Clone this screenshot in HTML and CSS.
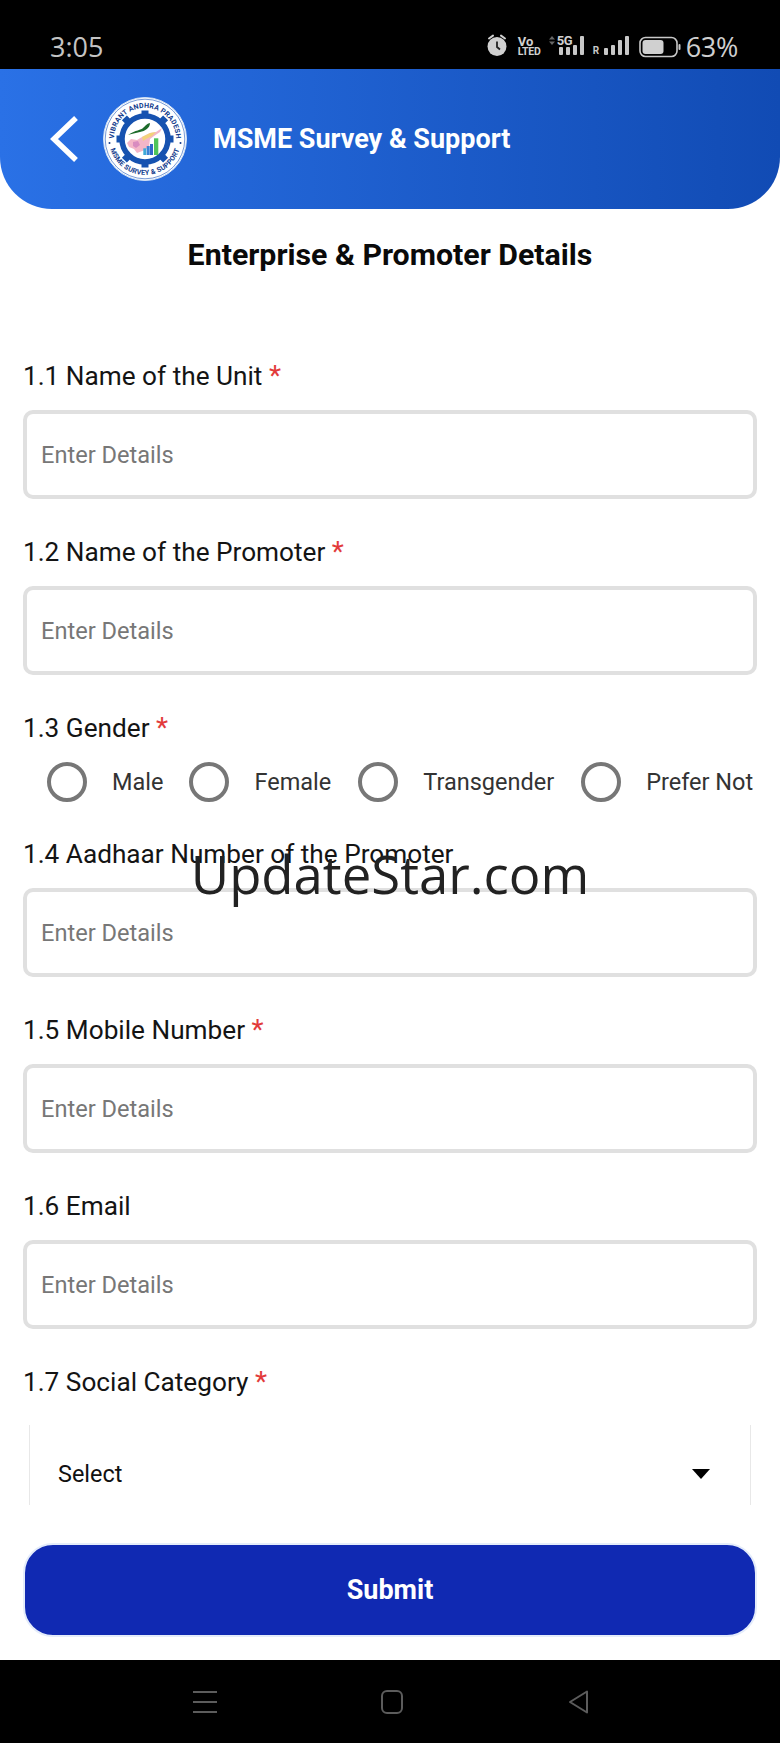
FILE: index.html
```html
<!DOCTYPE html>
<html lang="en">
<head>
<meta charset="utf-8">
<title>MSME Survey &amp; Support</title>
<link rel="stylesheet" href="styles.css">
</head>
<body>
<div class="screen">
  <div class="status">
    <span class="time">3:05</span>
    <div class="status-icons">
      <svg class="i-alarm" width="22" height="24" viewBox="0 0 22 24"><circle cx="11" cy="13.5" r="9.5" fill="#d0d0d0"/><path d="M3 5.500 7 2.600M19 5.500 15 2.600" stroke="#d0d0d0" stroke-width="2" stroke-linecap="round"/><path d="M11 8.500v5.500l3 2.500" stroke="#222" stroke-width="1.800" fill="none"/></svg>
      <span class="volte"><span class="vo">Vo</span><span class="lte">LTED</span></span>
      <svg class="i-updown" width="6" height="9" viewBox="0 0 6 9"><path d="M3 0 6 3.500H0zM3 9 0 5.500H6z" fill="#666"/></svg>
      <div class="signal sig-5g">
        <span class="g5">5G</span>
        <span class="bar b1"></span><span class="bar b2"></span><span class="bar b3"></span><span class="bar b4"></span>
      </div>
      <div class="signal sig-r">
        <span class="r">R</span>
        <span class="bar b1"></span><span class="bar b2"></span><span class="bar b3"></span><span class="bar b4"></span>
      </div>
      <svg class="i-batt" width="42" height="22" viewBox="0 0 42 22"><rect x="1" y="1.500" width="37" height="19" rx="5.500" fill="none" stroke="#c8c8c8" stroke-width="1.600"/><rect x="3.500" y="4" width="21" height="14" rx="3" fill="#d0d0d0"/><rect x="39.500" y="8" width="2" height="6" rx="1" fill="#c8c8c8"/></svg>
      <span class="pct">63%</span>
    </div>
  </div>

  <header class="appbar">
    <svg class="back" width="30" height="48" viewBox="0 0 30 48"><path d="M26 3 4 24 26 45" fill="none" stroke="#fff" stroke-width="5.500"/></svg>
    <svg class="logo" width="84" height="84" viewBox="0 0 84 84">
      <defs>
        <path id="arcTop" d="M11.500 47.400A31 31 0 1 1 72.500 47.400"/>
        <path id="arcBot" d="M6.500 36A36 36 0 1 0 77.500 36"/>
      </defs>
      <circle cx="42" cy="42" r="41.500" fill="#fff" stroke="#cfe0f5" stroke-width="1"/>
      <circle cx="42" cy="42" r="39.800" fill="none" stroke="#1b56b8" stroke-width="0.600"/>
      <text class="logo-t"><textPath href="#arcTop" startOffset="50%" text-anchor="middle">VIBRANT ANDHRA PRADESH</textPath></text>
      <text class="logo-t"><textPath href="#arcBot" startOffset="50%" text-anchor="middle">MSME SURVEY &amp; SUPPORT</textPath></text>
      <circle cx="6.500" cy="46" r="1" fill="#123a8c"/>
      <circle cx="77.500" cy="46" r="1" fill="#123a8c"/>
      <circle cx="42" cy="42" r="23" fill="none" stroke="#1652b0" stroke-width="5.500"/>
      <g fill="#1652b0">
        <rect x="38.500" y="13.500" width="7" height="6"/>
        <rect x="38.500" y="64.500" width="7" height="6"/>
        <rect x="13.500" y="38.500" width="6" height="7"/>
        <rect x="64.500" y="38.500" width="6" height="7"/>
        <rect x="20" y="20" width="7" height="6" transform="rotate(-45 23.500 23)"/>
        <rect x="57" y="20" width="7" height="6" transform="rotate(45 60.500 23)"/>
        <rect x="20" y="58" width="7" height="6" transform="rotate(45 23.500 61)"/>
        <rect x="57" y="58" width="7" height="6" transform="rotate(-45 60.500 61)"/>
      </g>
      <path d="M25 38C33 33 38 33 40 31 42 29 45 26 47 26 47 31 42 34 37 35 33 36 28 37 25 38z" fill="#1c6b2a"/>
      <path d="M24 46l4-4 6 1 5-3 8-4 6-1 6-4-2 4-6 4-4 3-1 8-4 3-8 3-3-4-5-2z" fill="#f4b6c8"/>
      <path d="M39 40l8-4 6-1-4 4-6 3-3 2z" fill="#f3d27a"/>
      <path d="M30 45l5-1 2 4-4 3-3-2z" fill="#d98cc0"/>
      <rect x="40.300" y="51.300" width="3" height="6.700" fill="#3fa9d8"/>
      <rect x="43.700" y="49" width="3" height="9" fill="#3b82d6"/>
      <rect x="47" y="47" width="3" height="11" fill="#2f66c8"/>
      <rect x="51" y="41.300" width="4.300" height="16.700" fill="#4fc45a"/>
    </svg>
    <span class="appbar-title">MSME Survey &amp; Support</span>
  </header>

  <h1 class="page-title">Enterprise &amp; Promoter Details</h1>

  <main class="form">
    <div class="field">
      <div class="label">1.1 Name of the Unit <span class="req">*</span></div>
      <div class="input">Enter Details</div>
    </div>
    <div class="field">
      <div class="label">1.2 Name of the Promoter <span class="req">*</span></div>
      <div class="input">Enter Details</div>
    </div>
    <div class="field field-radio">
      <div class="label">1.3 Gender <span class="req">*</span></div>
      <div class="radios">
        <span class="radio"></span><span class="opt opt-male">Male</span>
        <span class="radio"></span><span class="opt opt-female">Female</span>
        <span class="radio"></span><span class="opt opt-trans">Transgender</span>
        <span class="radio"></span><span class="opt opt-last">Prefer Not</span>
      </div>
    </div>
    <div class="field">
      <div class="label">1.4 Aadhaar Number of the Promoter</div>
      <div class="input">Enter Details</div>
    </div>
    <div class="field">
      <div class="label">1.5 Mobile Number <span class="req">*</span></div>
      <div class="input">Enter Details</div>
    </div>
    <div class="field">
      <div class="label">1.6 Email</div>
      <div class="input">Enter Details</div>
    </div>
    <div class="field">
      <div class="label">1.7 Social Category <span class="req">*</span></div>
      <div class="select">
        <span>Select</span>
        <span class="caret"></span>
      </div>
    </div>
  </main>

  <div class="actions"><div class="submit">Submit</div></div>

  <nav class="navbar">
    <svg width="24" height="24" viewBox="0 0 24 24"><path d="M0 2h24M0 12h24M0 22h24" stroke="#5c5c5c" stroke-width="2"/></svg>
    <svg width="24" height="24" viewBox="0 0 24 24"><rect x="2" y="1" width="20" height="22" rx="5" fill="none" stroke="#5c5c5c" stroke-width="2"/></svg>
    <svg width="24" height="24" viewBox="0 0 24 24"><path d="M20 1.500v21L3 12z" fill="none" stroke="#5c5c5c" stroke-width="2" stroke-linejoin="round"/></svg>
  </nav>

  <div class="watermark">UpdateStar.com</div>
</div>
</body>
</html>
```
FILE: styles.css
```css
* { box-sizing: border-box; }
html, body { margin: 0; padding: 0; background: #fff; }
.screen {
  position: relative;
  width: 780px;
  height: 1743px;
  display: flex;
  flex-direction: column;
  overflow: hidden;
  font-family: Roboto, "Liberation Sans", sans-serif;
  color: #111;
  background: #fff;
}
.status {
  height: 69px;
  flex: none;
  background: #000;
  color: #cfcfcf;
  display: flex;
  justify-content: space-between;
  align-items: flex-end;
  padding: 0 42px 12px 50px;
}
.time { font-size: 27px; line-height: 30px; margin-bottom: -5px; font-family: "Open Sans", Roboto, sans-serif; color: #c4c4c4; }
.status-icons { display: flex; align-items: flex-end; }
.i-alarm { margin-right: 10px; }
.volte {
  display: flex;
  flex-direction: column;
  font-weight: 700;
  width: 23px;
  color: #d0d0d0;
}
.vo { font-size: 13px; line-height: 10px; }
.lte { font-size: 10.500px; line-height: 10px; letter-spacing: -0.2px; }
.i-updown { margin-left: 8px; margin-bottom: 12px; }
.signal { position: relative; display: flex; align-items: flex-end; gap: 3px; height: 20px; margin-bottom: 2px; }
.signal .bar { width: 4px; background: #c8c8c8; border-radius: 1px; }
.bar.b1 { height: 7px; }
.bar.b2 { height: 10px; }
.bar.b3 { height: 15px; }
.bar.b4 { height: 19px; }
.sig-5g { padding-left: 4px; margin-left: 0; }
.sig-5g .bar.b1, .sig-5g .bar.b2 { height: 8px; }
.sig-5g .bar.b3 { height: 10px; }
.g5 { position: absolute; left: 2px; top: 0; font-size: 13px; line-height: 11px; font-weight: 700; letter-spacing: -0.5px; color: #d0d0d0; }
.sig-r { margin-left: 9px; }
.r { font-size: 10px; line-height: 9px; font-weight: 700; color: #c8c8c8; width: 8px; }
.i-batt { margin-left: 10px; margin-bottom: -1px; }
.pct { font-size: 27px; line-height: 30px; margin-left: 5px; margin-bottom: -5px; font-family: "Open Sans", Roboto, sans-serif; color: #cfcfcf; letter-spacing: -0.3px; }

.appbar {
  height: 140px;
  flex: none;
  background: linear-gradient(90deg, #2a71e6 0%, #114bb4 100%);
  border-radius: 0 0 52px 52px;
  display: flex;
  align-items: center;
  padding: 0 0 0 50px;
}
.back { margin-right: 23px; }
.logo { flex: none; margin-right: 26px; }
.logo-t { font: 700 7px Roboto, sans-serif; fill: #123a8c; letter-spacing: 0.2px; }
.appbar-title { font-size: 27px; font-weight: 700; color: #fff; }

.page-title {
  margin: 0;
  flex: none;
  height: 90px;
  padding-top: 26px;
  text-align: center;
  font-size: 30.300px;
  line-height: 40px;
  font-weight: 700;
  color: #0a0a0a;
}

.form {
  flex: none;
  height: 1206px;
  padding: 60px 23px 0;
  display: flex;
  flex-direction: column;
  gap: 36px;
  overflow: hidden;
}
.field { flex: none; display: flex; flex-direction: column; }
.label { font-size: 26.200px; line-height: 34px; height: 34px; color: #141414; }
.req { color: #e23b3b; font-size: 28px; }
.input {
  flex: none;
  margin-top: 17px;
  height: 89px;
  border: 4px solid #e0e0e0;
  border-radius: 10px;
  padding-left: 14px;
  display: flex;
  align-items: center;
  font-size: 23.600px;
  color: #777;
  background: #fff;
}
.radios {
  display: flex;
  align-items: center;
  margin: 17px 0 -1px;
  padding-left: 24px;
  font-size: 23.500px;
  color: #333;
}
.radio {
  flex: none;
  width: 40px;
  height: 40px;
  border: 4.500px solid #777;
  border-radius: 50%;
}
.opt { margin-left: 25px; margin-right: 25px; white-space: nowrap; }
.opt-male { margin-right: 26px; }
.opt-female { margin-right: 27px; }
.opt-trans { margin-right: 27px; }
.opt-last { margin-right: 0; margin-left: 25px; }

.select {
  flex: none;
  margin: 26px 6px 0;
  height: 98px;
  border-left: 1px solid #e8e8e8;
  border-right: 1px solid #e8e8e8;
  display: flex;
  align-items: center;
  justify-content: space-between;
  padding: 0 40px 0 28px;
  font-size: 23.400px;
  color: #111;
}
.caret { width: 0; height: 0; border-left: 9px solid transparent; border-right: 9px solid transparent; border-top: 10px solid #000; }

.actions { flex: 1; padding: 38px 23px 0; }
.submit {
  width: 100%;
  height: 94px;
  background: #1029b2;
  border: 2px solid #e4ecfa;
  border-radius: 30px;
  color: #fff;
  font-size: 27px;
  font-weight: 700;
  display: flex;
  align-items: center;
  justify-content: center;
}
.navbar {
  height: 83px;
  flex: none;
  background: #000;
  display: flex;
  align-items: center;
  justify-content: center;
  gap: 163px;
  padding: 0 0 0 4px;
}
.watermark {
  position: absolute;
  left: 0;
  right: 0;
  top: 838px;
  text-align: center;
  font-family: "Open Sans", "Noto Sans", sans-serif;
  font-size: 52.700px;
  line-height: 72px;
  color: #222;
}
```
